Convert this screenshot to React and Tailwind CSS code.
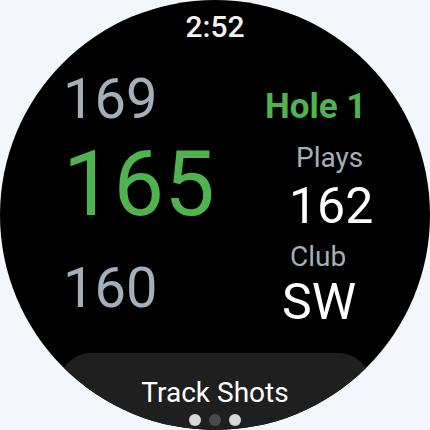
import React from 'react';

const font = { fontFamily: 'Roboto, "Noto Sans", sans-serif' };

const App = () => {
  return (
    <div className="w-[430px] h-[430px] bg-[#f3f6fa]" style={font}>
      <div className="w-full h-full rounded-full bg-black overflow-hidden flex flex-col items-center">
        {/* clock */}
        <div className="mt-[12px] text-[30px] leading-none font-medium text-[#f2f2f2]">2:52</div>

        {/* yardages + hole info */}
        <div className="flex w-full mt-[29px]">
          <div className="w-[260px] pl-[63px] flex flex-col items-start text-[#a3afba]">
            <div className="text-[56px] leading-none">169</div>
            <div className="mt-[13px] text-[90px] leading-none text-[#4fb34f]">165</div>
            <div className="mt-[30px] text-[56px] leading-none">160</div>
          </div>
          <div className="flex flex-col items-start">
            <div className="mt-[18px] ml-[5px] text-[35px] leading-none font-bold text-[#4fb34f]">Hole 1</div>
            <div className="mt-[20px] ml-[36px] text-[28px] leading-none text-[#a3afba]">Plays</div>
            <div className="mt-[9px] ml-[29px] text-[50px] leading-none text-white">162</div>
            <div className="mt-[12px] ml-[30px] text-[28px] leading-none text-[#a3afba]">Club</div>
            <div className="mt-[6px] ml-[22px] text-[50px] leading-none text-white">SW</div>
          </div>
        </div>

        {/* bottom action */}
        <div className="mt-auto w-[312px] h-[77px] rounded-t-[32px] bg-[#1f1f1f] flex flex-col items-center">
          <div className="mt-[26px] text-[28px] leading-none text-white">Track Shots</div>
          <div className="mt-[7px] flex gap-[8px]">
            <span className="w-[12px] h-[12px] rounded-full bg-[#d9d9d9]" />
            <span className="w-[12px] h-[12px] rounded-full bg-[#4a4a4a]" />
            <span className="w-[12px] h-[12px] rounded-full bg-[#d9d9d9]" />
          </div>
        </div>
      </div>
    </div>
  );
};

export default App;
